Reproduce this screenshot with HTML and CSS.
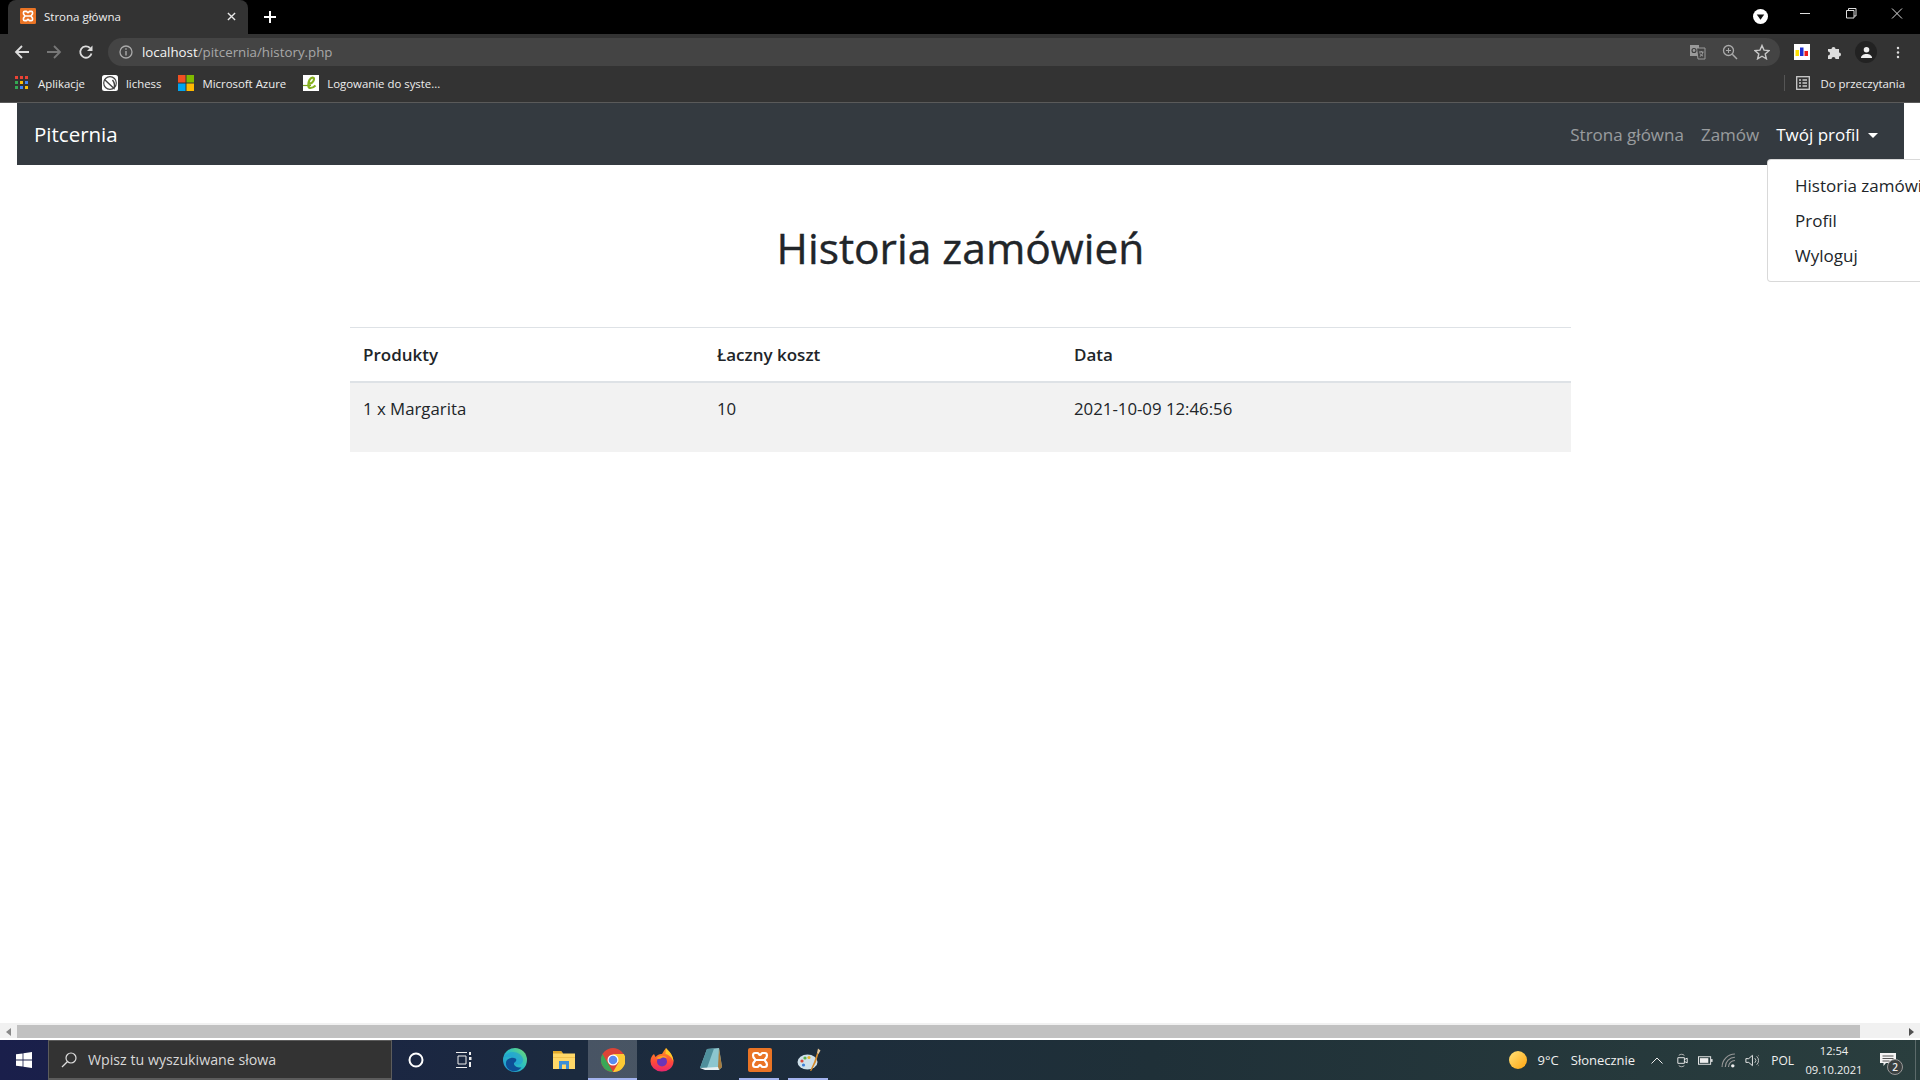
FILE: index.html
```html
<!DOCTYPE html>
<html lang="pl">
<head>
    <meta charset="UTF-8">
    <meta name="viewport" content="width=device-width, initial-scale=1.0">
    <title>Strona główna</title>
    <link rel="stylesheet" href="styles.css">
</head>
<body>

    <div class="tabstrip">
        <div class="tab">
            <svg class="favicon" viewBox="0 0 24 24"><rect width="24" height="24" rx="2" fill="#ea7425"/><path d="M7 5h2.500c1 0 1.500 2 2.500 2s1.500-2 2.500-2H17c2.500 0 2.500 4 .5 5.500-1 .8-1 2.200 0 3 2 1.500 2 5.500-.5 5.500h-2.500c-1 0-1.500-2-2.500-2s-1.500 2-2.500 2H7c-2.500 0-2.500-4-.5-5.500 1-.8 1-2.200 0-3C4.500 9 4.500 5 7 5zM8 12h8" fill="none" stroke="#fff" stroke-width="2.400" stroke-linejoin="round"/></svg>
            <span class="tab-title">Strona główna</span>
            <svg class="tab-close" viewBox="0 0 10 10"><path d="M1 1l8 8M9 1l-8 8" stroke="#e8e8e8" stroke-width="1.500"/></svg>
        </div>
        <svg class="new-tab" viewBox="0 0 12 12"><path d="M6 0v12M0 6h12" stroke="#fff" stroke-width="2"/></svg>
        <div class="window-controls">
            <svg class="media-btn" viewBox="0 0 14 14"><circle cx="7" cy="7" r="7" fill="#fff"/><path d="M3.500 5.200h7L7 10z" fill="#111"/></svg>
            <svg class="win-btn" viewBox="0 0 46 14"><path d="M18 6.500h10" stroke="#ddd"/></svg>
            <svg class="win-btn" viewBox="0 0 46 14"><path d="M18.500 3.500h7.500v7.500h-7.500zM20.500 3.500v-2h7.500v7.500h-2" fill="none" stroke="#ddd"/></svg>
            <svg class="win-btn" viewBox="0 0 46 14"><path d="M18 1.500l10 10M28 1.500l-10 10" stroke="#ddd"/></svg>
        </div>
    </div>

    <div class="toolbar">
        <svg class="nav-icon" viewBox="0 0 16 16"><path d="M15 8H2M8 2L2 8l6 6" fill="none" stroke="#ddd" stroke-width="1.800"/></svg>
        <svg class="nav-icon" viewBox="0 0 16 16"><path d="M1 8h13M8 2l6 6-6 6" fill="none" stroke="#777" stroke-width="1.800"/></svg>
        <svg class="nav-icon" viewBox="0 0 16 16"><path d="M13.500 9.500A5.700 5.700 0 1 1 12 4" fill="none" stroke="#ddd" stroke-width="1.800"/><path d="M14.500 1.500v5.500H9z" fill="#ddd"/></svg>
        <div class="omnibox">
            <svg class="info-icon" viewBox="0 0 14 14"><circle cx="7" cy="7" r="6" fill="none" stroke="#aaa" stroke-width="1.300"/><path d="M7 6v4.500M7 3.300v1.500" stroke="#aaa" stroke-width="1.400"/></svg>
            <span class="url"><b>localhost</b>/pitcernia/history.php</span>
            <div class="omni-icons">
                <svg class="omni-icon" viewBox="0 0 16 16"><rect x="0" y="1" width="9" height="11" fill="#9a9a9a"/><path d="M6.500 4h8.500v11H8z" fill="#444" stroke="#9a9a9a"/><circle cx="4" cy="6.500" r="2" fill="none" stroke="#3a3a3a" stroke-width="1.100"/><path d="M9 8h4.500M11.200 7v1M9.800 12.500c1.800-1 3-2.500 3-4.500M10 9.500c.6 1 1.500 2 3 2.500" fill="none" stroke="#aaa" stroke-width=".9"/></svg>
                <svg class="omni-icon" viewBox="0 0 16 16"><circle cx="6.500" cy="6.500" r="5" fill="none" stroke="#aaa" stroke-width="1.300"/><path d="M10.300 10.300l4.700 4.700" stroke="#aaa" stroke-width="1.500"/><path d="M6.500 4v5M4 6.500h5" stroke="#aaa" stroke-width="1.100"/></svg>
                <svg class="omni-icon" viewBox="0 0 16 16"><path d="M8 1.500l2 4.600 5 .5-3.800 3.300 1.200 4.900L8 12.200l-4.400 2.600 1.200-4.900L1 6.600l5-.5z" fill="none" stroke="#c8c8c8" stroke-width="1.400"/></svg>
            </div>
        </div>
        <div class="ext-icons">
            <svg class="ext-logo" viewBox="0 0 16 16"><rect width="16" height="16" fill="#fff"/><rect x="1.500" y="6" width="3.500" height="6" fill="#ffe000"/><rect x="6" y="3.500" width="3.500" height="8.500" fill="#2030d0"/><rect x="10.500" y="7" width="3.500" height="5" fill="#ee1c1c"/></svg>
            <svg class="ext-puzzle" viewBox="0 0 16 16"><path d="M1 5h3.500a2 2 0 1 1 4 0H12v3.500a2 2 0 1 1 0 4V15H8.500a2 2 0 1 0-4 0H1v-3.500a2 2 0 1 0 0-4z" fill="#ddd"/></svg>
            <div class="avatar"><svg viewBox="0 0 14 14"><circle cx="7" cy="4" r="3" fill="#eee"/><path d="M1 13c0-3 3-4.500 6-4.500s6 1.500 6 4.500z" fill="#eee"/></svg></div>
            <svg class="menu-dots" viewBox="0 0 4 16"><circle cx="2" cy="2.500" r="1.500" fill="#ddd"/><circle cx="2" cy="8" r="1.500" fill="#ddd"/><circle cx="2" cy="13.500" r="1.500" fill="#ddd"/></svg>
        </div>
    </div>

    <div class="bookmarks">
        <div class="bookmark">
            <svg class="bm-icon" viewBox="0 0 14 14">
                <rect x="0" y="0" width="3" height="3" fill="#ea4335"/><rect x="5" y="0" width="3" height="3" fill="#ea4335"/><rect x="10" y="0" width="3" height="3" fill="#ea4335"/>
                <rect x="0" y="5" width="3" height="3" fill="#34a853"/><rect x="5" y="5" width="3" height="3" fill="#fbbc05"/><rect x="10" y="5" width="3" height="3" fill="#4285f4"/>
                <rect x="0" y="10" width="3" height="3" fill="#34a853"/><rect x="5" y="10" width="3" height="3" fill="#4285f4"/><rect x="10" y="10" width="3" height="3" fill="#fbbc05"/>
            </svg>
            <span>Aplikacje</span>
        </div>
        <div class="bookmark">
            <svg class="bm-icon-lg" viewBox="0 0 16 16"><rect width="16" height="16" rx="2.500" fill="#fff"/><circle cx="8" cy="8" r="6.300" fill="none" stroke="#444" stroke-width="1.200"/><path d="M2.500 4.500L12 13.500c.8-2.500.5-6-1.500-8.500" fill="none" stroke="#444" stroke-width="1.400"/></svg>
            <span>lichess</span>
        </div>
        <div class="bookmark">
            <svg class="bm-icon-lg" viewBox="0 0 16 16"><rect width="7.500" height="7.500" fill="#f25022"/><rect x="8.500" width="7.500" height="7.500" fill="#7fba00"/><rect y="8.500" width="7.500" height="7.500" fill="#00a4ef"/><rect x="8.500" y="8.500" width="7.500" height="7.500" fill="#ffb900"/></svg>
            <span>Microsoft Azure</span>
        </div>
        <div class="bookmark">
            <svg class="bm-icon-lg" viewBox="0 0 16 16"><rect width="16" height="16" fill="#fff"/><path d="M0 10.500h8" stroke="#7aa61c" stroke-width="1.200"/><path d="M5 9c3 0 6-2 6-5 0-2-3-2-4.500 1S4.500 13 7.500 13c2 0 3.500-1 5-2.500" fill="none" stroke="#86b01f" stroke-width="2.200"/></svg>
            <span>Logowanie do syste...</span>
        </div>
        <div class="reading-list">
            <svg class="reading-icon" viewBox="0 0 14 14"><rect x=".7" y=".7" width="12.600" height="12.600" fill="none" stroke="#ccc" stroke-width="1.300"/><path d="M3 4h2M6.500 4H11M3 7h2M6.500 7H11M3 10h2M6.500 10H11" stroke="#ccc" stroke-width="1.300"/></svg>
            <span>Do przeczytania</span>
        </div>
    </div>

    <div class="viewport">
        <nav class="navbar">
            <a class="brand">Pitcernia</a>
            <ul class="nav-links">
                <li>Strona główna</li>
                <li>Zamów</li>
                <li class="active">Twój profil <span class="caret"></span></li>
            </ul>
        </nav>
        <div class="dropdown">
            <div class="dropdown-item">Historia zamówień</div>
            <div class="dropdown-item">Profil</div>
            <div class="dropdown-item">Wyloguj</div>
        </div>

        <main class="content">
            <h1>Historia zamówień</h1>
            <table class="orders">
                <thead>
                    <tr>
                        <th class="col-products">Produkty</th>
                        <th class="col-cost">Łaczny koszt</th>
                        <th>Data</th>
                    </tr>
                </thead>
                <tbody>
                    <tr>
                        <td>1 x Margarita</td>
                        <td>10</td>
                        <td>2021-10-09 12:46:56</td>
                    </tr>
                </tbody>
            </table>
        </main>
    </div>

    <div class="scrollbar">
        <span class="arrow-left"></span>
        <div class="scroll-track"><div class="scroll-thumb"></div></div>
        <span class="arrow-right"></span>
    </div>

    <footer class="taskbar">
        <div class="start">
            <svg viewBox="0 0 16 16"><path d="M0 2.300l6.600-.9v6.200H0zM7.400 1.300L16 0v7.600H7.400zM0 8.400h6.600v6.200L0 13.700zM7.400 8.400H16V16l-8.600-1.300z" fill="#fff"/></svg>
        </div>
        <div class="searchbox">
            <svg viewBox="0 0 16 16"><circle cx="10" cy="6" r="5" fill="none" stroke="#ddd" stroke-width="1.200"/><path d="M6.300 9.700L1 15" stroke="#ddd" stroke-width="1.300"/></svg>
            <span>Wpisz tu wyszukiwane słowa</span>
        </div>
        <div class="task-slot">
            <svg class="cortana" viewBox="0 0 16 16"><circle cx="8" cy="8" r="6.500" fill="none" stroke="#fff" stroke-width="2"/></svg>
        </div>
        <div class="task-slot">
            <svg class="taskview" viewBox="0 0 16 16"><path d="M0 .5h11M0 15.500h11M2 4h8v8H2z" fill="none" stroke="#eee"/><rect x="13" y="0" width="2" height="3" fill="#eee"/><rect x="13" y="5" width="2.500" height="3" fill="#eee"/><rect x="13" y="10" width="2" height="5" fill="#eee"/></svg>
        </div>
        <div class="app-icons">
            <div class="app">
                <svg viewBox="0 0 24 24"><defs><linearGradient id="edgeTop" x1="0" y1="1" x2="1" y2="0"><stop offset="0" stop-color="#1e8fd6"/><stop offset=".55" stop-color="#2cc0c0"/><stop offset="1" stop-color="#78dc6a"/></linearGradient></defs><circle cx="12" cy="12" r="12" fill="url(#edgeTop)"/><path d="M1 9c2-3 5-5 9-5 5 0 9 3 10 7 .5 2.500-1 5-4 5.500-2 .3-4-.2-5-1.500 2-1 3-3 1-4.500-3-2-8-1-11-1.500z" fill="#1f9bd8" opacity=".6"/><path d="M4 12c2-2 6-3 8.500-1.500 1.500 1 .8 3-1.500 4.500-.5 3 3.500 5 7.500 4.500C15 24 8 24.500 4.500 20 2.500 17.500 2.500 14 4 12z" fill="#0e4f96"/></svg>
            </div>
            <div class="app">
                <svg viewBox="0 0 24 24"><path d="M1 3h8l2 2.500h12V21H1z" fill="#ffd868"/><path d="M1 3h8l2 2.500H1z" fill="#e2a829"/><path d="M7 13h10v8h-3v-4.500h-4V21H7z" fill="#3a8fd8"/><rect x="1" y="9" width="22" height="1" fill="#f3c24e"/></svg>
            </div>
            <div class="app app-open">
                <svg viewBox="0 0 24 24"><circle cx="12" cy="12" r="12" fill="#db4437"/><path d="M12 6h10.900A12 12 0 0 1 12 24l5.500-9.500z" fill="#fcc934"/><path d="M1.600 6L7 15.500 12 24A12 12 0 0 1 1.600 6z" fill="#3aa757"/><circle cx="12" cy="12" r="5.500" fill="#fff"/><circle cx="12" cy="12" r="4.300" fill="#5a8bf0"/></svg>
            </div>
            <div class="app">
                <svg viewBox="0 0 24 24"><defs><linearGradient id="foxBody" x1="0" y1="0" x2="0" y2="1"><stop offset="0" stop-color="#ff9a1f"/><stop offset=".6" stop-color="#ff4a3a"/><stop offset="1" stop-color="#e8246e"/></linearGradient></defs><path d="M16 0c1 2.500 4.500 4.500 6.300 8.500 1.300 3 1.200 4.500 1.200 5.500A11.500 10 0 1 1 .5 13c0-3 1.500-5.500 3.500-7L5.500 9c2-2.500 5-3.500 6.500-3 1-2 2.500-4 4-6z" fill="url(#foxBody)"/><path d="M16 0c3 3.500 7 6 7.500 14-1-4-4.500-7.500-8-8z" fill="#ffc928"/><circle cx="12" cy="13.500" r="5" fill="#6a35b8"/><path d="M6.500 10.500C9 7 15 7 17 10c-2.500-.8-5-1-6 .5-1 .5-3 .5-4.500 0z" fill="#ff9f1f"/></svg>
            </div>
            <div class="app">
                <svg viewBox="0 0 24 24"><path d="M8 1l12-1 3 19-3 3L1 20z" fill="#8cc6cf"/><path d="M8 1l7-.6L8 20l-7 0z" fill="#4f8f9c"/><path d="M20 0l3 19-3 3-1-3z" fill="#a87b3d"/><path d="M1 20l18-1 1 3H6z" fill="#e8f0f2"/></svg>
            </div>
            <div class="app app-running">
                <svg viewBox="0 0 24 24"><rect width="24" height="24" rx="2" fill="#ea7425"/><path d="M7 5h2.500c1 0 1.500 2 2.500 2s1.500-2 2.500-2H17c2.500 0 2.500 4 .5 5.500-1 .8-1 2.200 0 3 2 1.500 2 5.500-.5 5.500h-2.500c-1 0-1.500-2-2.500-2s-1.500 2-2.500 2H7c-2.500 0-2.500-4-.5-5.500 1-.8 1-2.200 0-3C4.500 9 4.500 5 7 5zM8 12h8" fill="none" stroke="#fff" stroke-width="2.200" stroke-linejoin="round"/></svg>
            </div>
            <div class="app app-running">
                <svg viewBox="0 0 24 24"><ellipse cx="10.500" cy="14" rx="10" ry="7.500" fill="#cfe0ea"/><circle cx="5" cy="13" r="1.600" fill="#d9463a"/><circle cx="8" cy="10" r="1.600" fill="#5ab04b"/><circle cx="12" cy="9.500" r="1.600" fill="#e8b52c"/><circle cx="6.500" cy="17" r="1.600" fill="#3f7fd6"/><path d="M20 5l-3 9-4 9 1.500-.2 4.500-8.800 2.500-8.500z" fill="#d58a2c"/><path d="M20 5l1-4.500 2.500 2-2 3.500z" fill="#e8c89a"/></svg>
            </div>
        </div>
        <div class="tray">
            <div class="weather"></div>
            <span class="temp">9°C</span>
            <span class="sky">Słonecznie</span>
            <svg class="tray-caret" viewBox="0 0 12 7"><path d="M.5 6.500L6 1l5.500 5.500" fill="none" stroke="#eee"/></svg>
            <svg class="tray-icon" viewBox="0 0 14 16"><path d="M2 5h7v6H2zM9 7l3-1.500v5L9 9" fill="none" stroke="#eee"/><path d="M3 2.500c2-1.500 4-1.500 6 0M3 13.500c2 1.500 4 1.500 6 0" fill="none" stroke="#bbb"/></svg>
            <svg class="tray-icon" viewBox="0 0 16 10"><rect x=".5" y="1" width="13" height="8" fill="none" stroke="#eee"/><rect x="2" y="2.500" width="9" height="5" fill="#eee"/><rect x="14" y="3.500" width="1.500" height="3" fill="#eee"/></svg>
            <svg class="tray-icon" viewBox="0 0 14 14"><path d="M1 13A12 12 0 0 1 13 1M4 13a9 9 0 0 1 9-9M7 13a6 6 0 0 1 6-6" fill="none" stroke="#999"/><circle cx="11" cy="12" r="1.600" fill="#eee"/></svg>
            <svg class="tray-icon" viewBox="-1 0 16 14"><path d="M1 5h3l4-3.500v11L4 9H1z" fill="none" stroke="#eee"/><path d="M10.500 4.500a3.500 3.500 0 0 1 0 5M12.500 2.500a6 6 0 0 1 0 9" fill="none" stroke="#ccc"/><path d="M14 1a8 8 0 0 1 0 12" fill="none" stroke="#777"/></svg>
            <span class="lang">POL</span>
            <div class="clock">
                <span>12:54</span>
                <span>09.10.2021</span>
            </div>
            <div class="notify">
                <svg viewBox="0 0 16 14"><path d="M0 0h16v10H6l-2.500 3V10H0z" fill="#f4f4f4"/><path d="M2.500 3h11M2.500 5.500h11M2.500 8h7" stroke="#555"/></svg>
                <span class="notify-count">2</span>
            </div>
            <div class="show-desktop"></div>
        </div>
    </footer>

</body>
</html>
```

FILE: styles.css
```css
* {
    box-sizing: border-box;
}
html, body {
    height: 100%;
}
body {
    margin: 0;
    display: flex;
    flex-direction: column;
    height: 100vh;
    overflow: hidden;
    font-family: "Open Sans", "Noto Sans", sans-serif;
    background: #fff;
    color: #212529;
}
svg {
    display: block;
    flex: none;
}

/* browser chrome */
.tabstrip {
    height: 34px;
    background: #000;
    display: flex;
    align-items: center;
    padding-left: 8px;
    flex: none;
}
.tab {
    width: 240px;
    height: 34px;
    background: #333;
    border-radius: 8px 8px 0 0;
    display: flex;
    align-items: center;
    padding: 0 12px 2px 12px;
    color: #eee;
    font-size: 11.5px;
}
.favicon {
    width: 16px;
    height: 16px;
    margin-right: 8px;
}
.tab-title {
    flex: 1;
}
.tab-close {
    width: 9px;
    height: 9px;
}
.new-tab {
    width: 12px;
    height: 12px;
    margin-left: 16px;
}
.window-controls {
    margin-left: auto;
    display: flex;
    align-items: center;
}
.media-btn {
    width: 15px;
    height: 15px;
    margin-right: 14px;
    margin-top: -1px;
}
.win-btn {
    width: 46px;
    height: 14px;
    margin-top: -6px;
}

.toolbar {
    height: 36px;
    background: #333;
    display: flex;
    align-items: center;
    padding-left: 14px;
    flex: none;
}
.nav-icon {
    width: 16px;
    height: 16px;
    margin-right: 16px;
}
.omnibox {
    margin-left: -2px;
    width: 1672px;
    height: 28px;
    background: #444;
    border-radius: 14px;
    display: flex;
    align-items: center;
    padding: 0 10px 0 11px;
    font-size: 13.3px;
    color: #a8a8a8;
}
.info-icon {
    width: 14px;
    height: 14px;
    margin-right: 9px;
}
.url b {
    font-weight: 500;
    color: #f4f4f4;
}
.omni-icons {
    margin-left: auto;
    display: flex;
    gap: 16px;
}
.omni-icon {
    width: 16px;
    height: 16px;
}
.ext-icons {
    display: flex;
    align-items: center;
    margin-left: 14px;
}
.ext-logo {
    width: 16px;
    height: 16px;
}
.ext-puzzle {
    width: 16px;
    height: 16px;
    margin-left: 17px;
}
.avatar {
    width: 22px;
    height: 22px;
    border-radius: 50%;
    background: #222;
    margin-left: 12px;
    display: flex;
    align-items: center;
    justify-content: center;
}
.avatar svg {
    width: 13px;
    height: 13px;
}
.menu-dots {
    width: 4px;
    height: 13px;
    margin-left: 19px;
}

.bookmarks {
    height: 33px;
    background: #333;
    border-bottom: 1px solid #5a5a5a;
    display: flex;
    align-items: center;
    padding: 0 0 6px 15px;
    font-size: 11.4px;
    color: #eee;
    flex: none;
}
.bookmark {
    display: flex;
    align-items: center;
    margin-right: 17px;
}
.bm-icon {
    width: 14px;
    height: 14px;
    margin-right: 9px;
}
.bm-icon-lg {
    width: 16px;
    height: 16px;
    margin-right: 8px;
}
.reading-list {
    margin-left: auto;
    margin-right: 15px;
    padding-left: 11px;
    border-left: 1px solid #555;
    height: 16px;
    display: flex;
    align-items: center;
}
.reading-icon {
    width: 14px;
    height: 14px;
    margin-right: 10px;
}

/* page */
.viewport {
    flex: 1;
    position: relative;
    overflow: hidden;
    padding-left: 17px;
    padding-right: 16px;
}
.navbar {
    height: 62px;
    background: #343a40;
    display: flex;
    align-items: center;
    justify-content: space-between;
    padding: 0 26px 0 17px;
}
.brand {
    color: #fff;
    font-size: 20.5px;
}
.nav-links {
    list-style: none;
    display: flex;
    gap: 17px;
    margin: 0;
    padding: 0;
    font-size: 17px;
    color: rgba(255, 255, 255, .5);
}
.nav-links .active {
    color: #fff;
}
.caret {
    display: inline-block;
    margin-left: 4px;
    vertical-align: 3px;
    border-top: 5px solid #fff;
    border-left: 5px solid transparent;
    border-right: 5px solid transparent;
}
.dropdown {
    position: absolute;
    top: 56px;
    left: 1767px;
    width: 240px;
    height: 123px;
    background: #fff;
    border: 1px solid rgba(0, 0, 0, .15);
    border-radius: 4px;
    padding: 8px 0;
}
.dropdown-item {
    height: 35px;
    padding-left: 27px;
    font-size: 17px;
    line-height: 35px;
    white-space: nowrap;
}
.content {
    width: 1221px;
    margin-left: 333px;
}
h1 {
    margin: 53px 0 49px;
    text-align: center;
    font-size: 42.5px;
    font-weight: 500;
    -webkit-text-stroke: .4px #212529;
    line-height: 60px;
}
.orders {
    width: 100%;
    border-collapse: collapse;
    font-size: 16.8px;
}
.orders th {
    text-align: left;
    font-weight: 600;
    font-size: 17px;
    height: 54px;
    padding: 0 13px;
    border-top: 1px solid #dee2e6;
    border-bottom: 2px solid #dee2e6;
}
.orders td {
    height: 70px;
    padding: 14px 13px 0;
    vertical-align: top;
    background: #f2f2f2;
}
.col-products {
    width: 354px;
}
.col-cost {
    width: 357px;
}

/* horizontal scrollbar */
.scrollbar {
    height: 17px;
    background: #f1f1f1;
    display: flex;
    align-items: center;
    flex: none;
    padding-top: 2px;
    border-bottom: 2px solid #fff;
}
.arrow-left, .arrow-right {
    width: 17px;
    display: flex;
    justify-content: center;
}
.arrow-left::before {
    content: "";
    border-right: 5px solid #888;
    border-top: 4px solid transparent;
    border-bottom: 4px solid transparent;
}
.arrow-right::before {
    content: "";
    border-left: 5px solid #505050;
    border-top: 4px solid transparent;
    border-bottom: 4px solid transparent;
}
.scroll-track {
    flex: 1;
    height: 13px;
}
.scroll-thumb {
    width: 1843px;
    height: 100%;
    background: #c1c1c1;
}

/* windows taskbar */
.taskbar {
    height: 40px;
    flex: none;
    display: flex;
    align-items: center;
    background: linear-gradient(90deg, #1a1f4b 0%, #1b2a3e 30%, #1f3038 60%, #2a3e3e 100%);
    color: #f0f0f0;
}
.start {
    width: 48px;
    display: flex;
    justify-content: center;
}
.start svg {
    width: 16px;
    height: 16px;
}
.searchbox {
    width: 344px;
    height: 40px;
    background: #333;
    border: 1px solid #5c5c5c;
    border-bottom-width: 2px;
    display: flex;
    align-items: center;
    padding-left: 12px;
    font-size: 14.2px;
    color: #d8d8d8;
}
.searchbox svg {
    width: 16px;
    height: 16px;
    margin-right: 11px;
}
.task-slot {
    width: 48px;
    display: flex;
    justify-content: center;
}
.cortana {
    width: 16px;
    height: 16px;
}
.taskview {
    width: 16px;
    height: 16px;
}
.app-icons {
    display: flex;
    margin-left: 2px;
}
.app {
    width: 49px;
    height: 40px;
    display: flex;
    align-items: center;
    justify-content: center;
    position: relative;
}
.app svg {
    width: 24px;
    height: 24px;
}
.app-open {
    background: rgba(255, 255, 255, .2);
}
.app-open::after, .app-running::after {
    content: "";
    position: absolute;
    left: 4px;
    right: 5px;
    bottom: 0;
    height: 2px;
    background: #a3b3ee;
}
.app-open::after {
    left: 0;
    right: 0;
}
.tray {
    margin-left: auto;
    display: flex;
    align-items: center;
    font-size: 13px;
    height: 40px;
}
.weather {
    width: 18px;
    height: 18px;
    border-radius: 50%;
    background: linear-gradient(135deg, #ffe27a, #ffa50f);
    margin-right: 11px;
}
.sky {
    margin-left: 12px;
    margin-right: 16px;
}
.tray-caret {
    width: 12px;
    height: 7px;
    margin-right: 12px;
}
.tray-icon {
    width: 15px;
    height: 15px;
    margin-right: 8px;
}
.lang {
    font-size: 12px;
    margin-left: 4px;
    margin-right: 11px;
}
.clock {
    display: flex;
    flex-direction: column;
    align-items: center;
    font-size: 11.2px;
    line-height: 19px;
    width: 58px;
}
.notify {
    position: relative;
    width: 20px;
    margin-left: 17px;
    margin-right: 15px;
}
.notify svg {
    width: 16px;
    height: 14px;
}
.notify-count {
    position: absolute;
    left: 7px;
    top: 6px;
    width: 16px;
    height: 16px;
    border-radius: 50%;
    border: 1px solid #999;
    background: #3a4040;
    font-size: 10px;
    font-weight: 600;
    line-height: 14px;
    text-align: center;
}
.show-desktop {
    width: 5px;
    height: 40px;
    border-left: 1px solid #5c6a6a;
}
```
